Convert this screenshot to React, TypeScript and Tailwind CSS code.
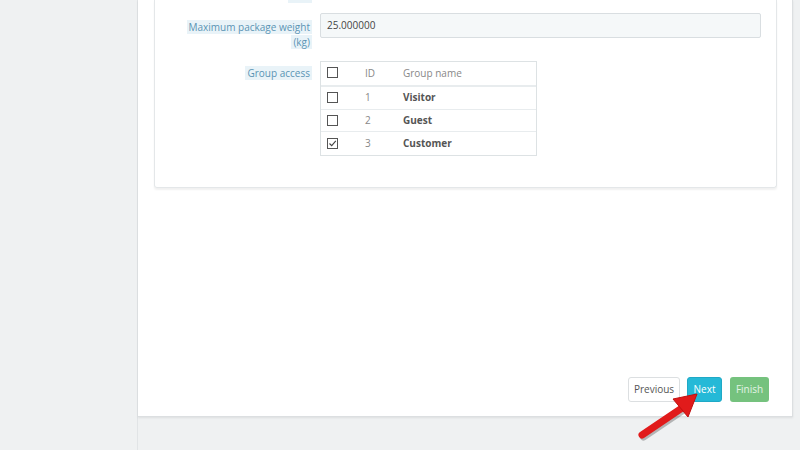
import React from 'react';

const groups = [
  { id: 1, name: 'Visitor', checked: false },
  { id: 2, name: 'Guest', checked: false },
  { id: 3, name: 'Customer', checked: true },
];

const Box = ({ checked }: { checked?: boolean }) => (
  <span className="w-[11px] h-[11px] border border-[#555] bg-white flex items-center justify-center">
    {checked && (
      <svg width="9" height="9" viewBox="0 0 9 9">
        <path d="M1.5 4.5 L3.7 6.7 L7.8 1.8" stroke="#444" strokeWidth="1.1" fill="none" />
      </svg>
    )}
  </span>
);

const Label = ({ children }: { children: React.ReactNode }) => (
  <span className="bg-[#e9f3f8] text-[#5a94b4] [box-decoration-break:clone] px-[2px]">{children}</span>
);

export default function App() {
  return (
    <div
      className="relative w-[800px] h-[450px] bg-[#eff1f2] flex overflow-hidden text-[10px]"
      style={{ fontFamily: '"Open Sans", "Noto Sans", sans-serif' }}
    >
      <div className="w-[138px] shrink-0 border-r border-[#e1e4e6]" />
      <div className="w-[655px] h-[417px] bg-white border-b border-r border-[#dcdfe1] shadow-[0_1px_2px_rgba(0,0,0,0.08)] pl-[16px] flex flex-col">
        <div className="w-[623px] h-[188px] border-l border-r border-b border-[#e4e7e9] rounded-b-[3px] shadow-[0_2px_2px_rgba(0,0,0,0.06)] flex flex-col pr-[15px]">
          <div className="flex h-[3px]">
            <div className="w-[157px] flex justify-end">
              <div className="w-[24px] h-[3px] bg-[#e9f3f8]" />
            </div>
          </div>
          <div className="flex gap-[8px] mt-[10px]">
            <div className="w-[157px] text-right leading-[15px] pt-[7px]">
              <Label>Maximum package weight</Label>
              <br />
              <Label>(kg)</Label>
            </div>
            <div className="flex-1 h-[25px] bg-[#f5f8f9] border border-[#d9dee1] rounded-[2px] flex items-center pl-[6px] text-[#444]">
              25.000000
            </div>
          </div>
          <div className="flex gap-[8px] mt-[11px]">
            <div className="w-[157px] text-right leading-[15px] pt-[5px]">
              <Label>Group access</Label>
            </div>
            <div className="w-[217px] border border-[#dde2e4] text-[#555]">
              <div className="h-[25px] flex items-center border-b-2 border-[#e8ecee]">
                <div className="w-[38px] pl-[6px] flex items-center -mt-[2px]"><Box /></div>
                <div className="w-[44px] text-[#888] pl-[6px]">ID</div>
                <div className="text-[#888]">Group name</div>
              </div>
              {groups.map((g, i) => (
                <div
                  key={g.id}
                  className={`h-[22.5px] flex items-center ${i < groups.length - 1 ? 'border-b border-[#e8ecee]' : ''}`}
                >
                  <div className="w-[38px] pl-[6px] flex items-center"><Box checked={g.checked} /></div>
                  <div className="w-[44px] text-[#888] pl-[6px]">{g.id}</div>
                  <div className="font-bold text-[#555]">{g.name}</div>
                </div>
              ))}
            </div>
          </div>
        </div>
        <div className="flex-1" />
        <div className="flex justify-end gap-[7px] pr-[23px] pb-[14px]">
          <button className="h-[25px] w-[52px] bg-white border border-[#dcdfe1] rounded-[3px] text-[#555]">Previous</button>
          <button className="h-[25px] w-[35px] bg-[#25b9d7] border border-[#1fa9c6] rounded-[3px] text-white">Next</button>
          <button className="h-[25px] w-[39px] ml-[1px] bg-[#75c27e] rounded-[3px] text-white/80">Finish</button>
        </div>
      </div>
      <svg className="absolute left-[630px] top-[385px]" width="80" height="60" viewBox="0 0 80 60">
        <path d="M12 50 L52 23" stroke="rgba(0,0,0,0.25)" strokeWidth="7" strokeLinecap="round" transform="translate(1.5,2)" />
        <path d="M12 50 L52 23" stroke="#e11b1b" strokeWidth="7" strokeLinecap="round" />
        <path d="M43 14 L67 9 L58 32 Z" fill="#e11b1b" stroke="#c01010" strokeWidth="1" strokeLinejoin="round" />
      </svg>
    </div>
  );
}
